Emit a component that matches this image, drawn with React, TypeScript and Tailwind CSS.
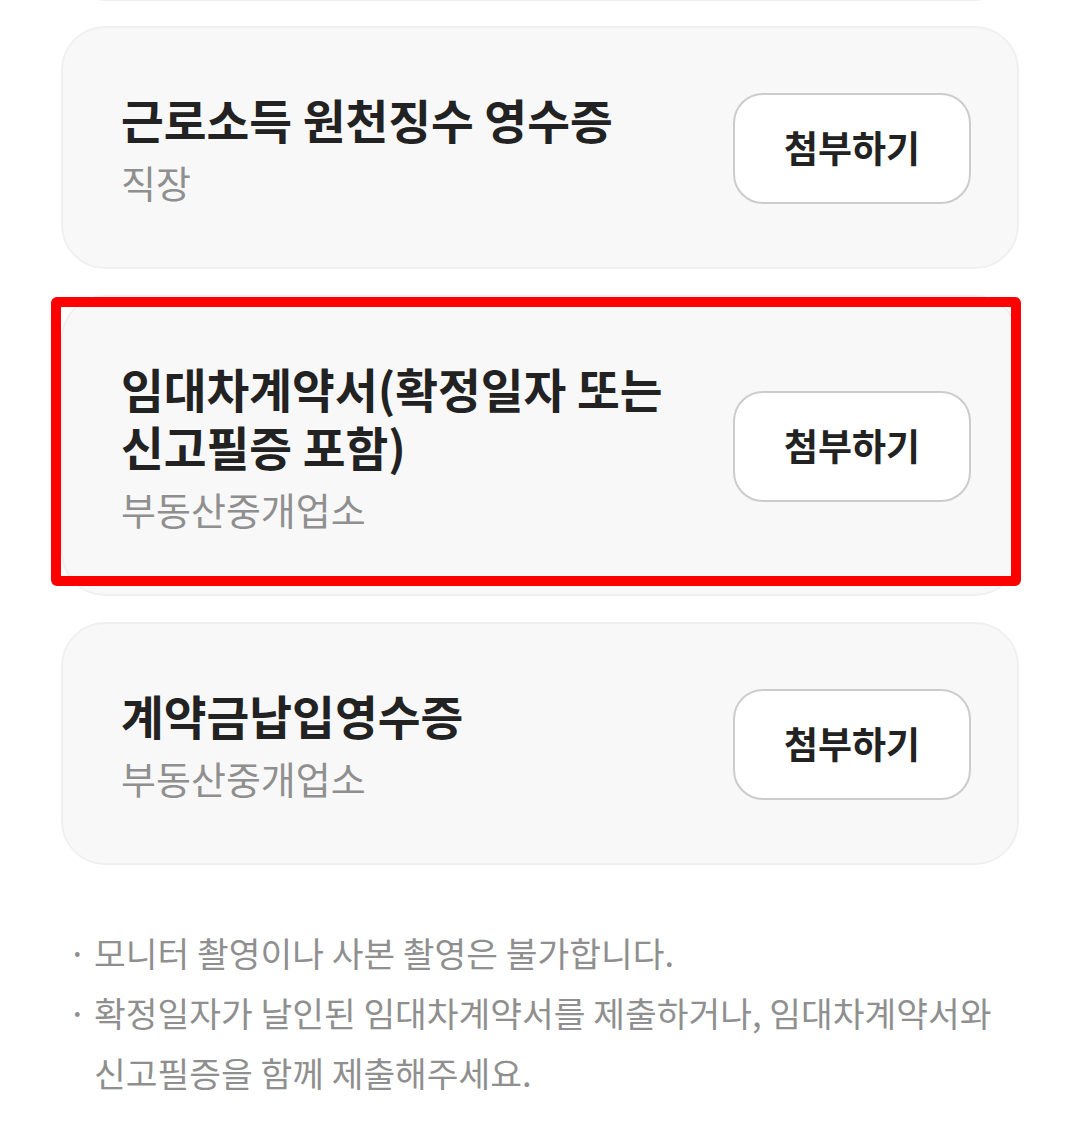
const DOCS = [
  { title: "근로소득 원천징수 영수증", source: "직장", marked: false },
  { title: "임대차계약서(확정일자 또는 신고필증 포함)", source: "부동산중개업소", marked: true },
  { title: "계약금납입영수증", source: "부동산중개업소", marked: false },
];

const NOTES = [
  "모니터 촬영이나 사본 촬영은 불가합니다.",
  "확정일자가 날인된 임대차계약서를 제출하거나, 임대차계약서와 신고필증을 함께 제출해주세요.",
];

function DocCard({ title, source, marked }: { title: string; source: string; marked: boolean }) {
  return (
    <div className="relative flex items-center gap-[24px] rounded-[44px] border-2 border-[#f0f0f0] bg-[#f8f8f8] pt-[62px] pb-[61px] pl-[58px] pr-[46px]">
      <div className="flex-1 min-w-0 break-keep">
        <h3 className="text-[46.5px] leading-[58px] font-bold text-[#222222]">{title}</h3>
        <p className="mt-[10px] text-[38px] leading-[48px] text-[#8f8f8f]">{source}</p>
      </div>
      <button className="flex h-[111px] w-[238px] shrink-0 items-center justify-center rounded-[30px] border-2 border-[#cccccc] bg-white text-[37px] font-bold text-[#222222]">
        첨부하기
      </button>

      {/* highlight box */}
      {marked && (
        <div className="pointer-events-none absolute left-[-12px] top-[0px] h-[289px] w-[970px] rounded-[6px] border-[10px] border-[#ff0000]" />
      )}
    </div>
  );
}

export default function App() {
  return (
    <div
      className="flex min-h-[1124px] flex-col overflow-hidden bg-white px-[61px]"
      style={{ fontFamily: '"Noto Sans CJK KR", "Noto Sans", sans-serif' }}
    >
      {/* previous card, scrolled off */}
      <div className="-mt-[100px] h-[101px] shrink-0 rounded-b-[44px] border-2 border-t-0 border-[#f0f0f0] bg-[#f8f8f8]" />

      <div className="mt-[25px] flex flex-col gap-[26px]">
        {DOCS.map((doc) => (
          <DocCard key={doc.title} {...doc} />
        ))}
      </div>

      <ul className="mt-[57px] break-keep text-[34.5px] leading-[60px] text-[#8f8f8f]">
        {NOTES.map((note) => (
          <li key={note} className="flex">
            <span className="w-[33px] shrink-0 text-center">·</span>
            <span>{note}</span>
          </li>
        ))}
      </ul>
    </div>
  );
}
